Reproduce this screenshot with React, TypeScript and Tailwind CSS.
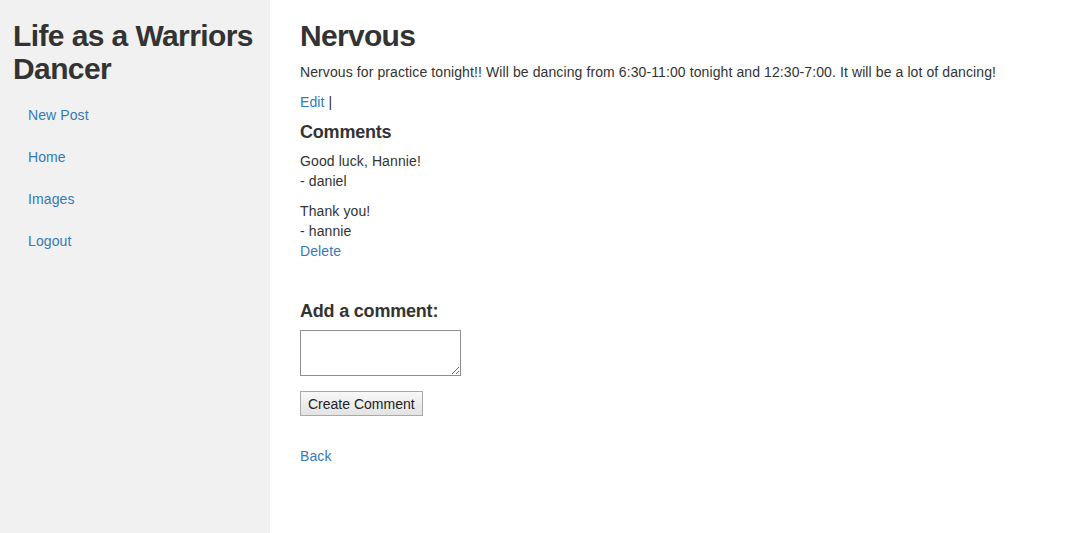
import React from "react";

export default function App() {
  const link = "text-[#337ab7] hover:underline";
  return (
    <div
      className="flex min-h-[533px] text-[14px] leading-[20px] text-[#333333] tracking-[0.1px]"
      style={{ fontFamily: '"Liberation Sans", Arial, sans-serif' }}
    >
      <aside className="w-[270px] shrink-0 bg-[#f1f1f1] pl-[13px] pr-[4px]">
        <h2 className="mt-[19px] mb-[10px] text-[30px] leading-[33px] font-bold tracking-[-0.6px] whitespace-nowrap">
          Life as a Warriors
          <br />
          Dancer
        </h2>
        <ul className="flex flex-col gap-[2px]">
          {["New Post", "Home", "Images", "Logout"].map((t) => (
            <li key={t}>
              <a href="#" className={`block px-[15px] py-[10px] ${link}`}>
                {t}
              </a>
            </li>
          ))}
        </ul>
      </aside>
      <main className="flex-1 pl-[30px] pr-[10px]">
        <h2 className="mt-[19px] mb-[10px] text-[30px] leading-[33px] font-bold tracking-[-0.7px]">Nervous</h2>
        <p className="mb-[10px] whitespace-nowrap">
          Nervous for practice tonight!! Will be dancing from 6:30-11:00 tonight and 12:30-7:00. It will be a lot of dancing!
        </p>
        <p className="mb-[10px]">
          <a href="#" className={link}>Edit</a> |
        </p>
        <h4 className="mb-[9px] text-[18px] leading-[20px] font-bold tracking-[-0.2px]">Comments</h4>
        <p className="mb-[10px]">
          Good luck, Hannie!
          <br />- daniel
        </p>
        <p>
          Thank you!
          <br />- hannie
        </p>
        <a href="#" className={`block ${link}`}>Delete</a>
        <h4 className="mt-[40px] mb-[9px] text-[18px] leading-[20px] font-bold tracking-[-0.2px]">Add a comment:</h4>
        <textarea className="block w-[161px] h-[46px] border border-[#8e8e8e] bg-white resize-y" />
        <button className="mt-[15px] block h-[25px] px-[7px] border border-[#a9a9a9] bg-gradient-to-b from-[#f8f8f8] to-[#e3e3e3] text-[14px] leading-[20px] tracking-normal text-[#222]">
          Create Comment
        </button>
        <a href="#" className={`block mt-[30px] ${link}`}>Back</a>
      </main>
    </div>
  );
}
